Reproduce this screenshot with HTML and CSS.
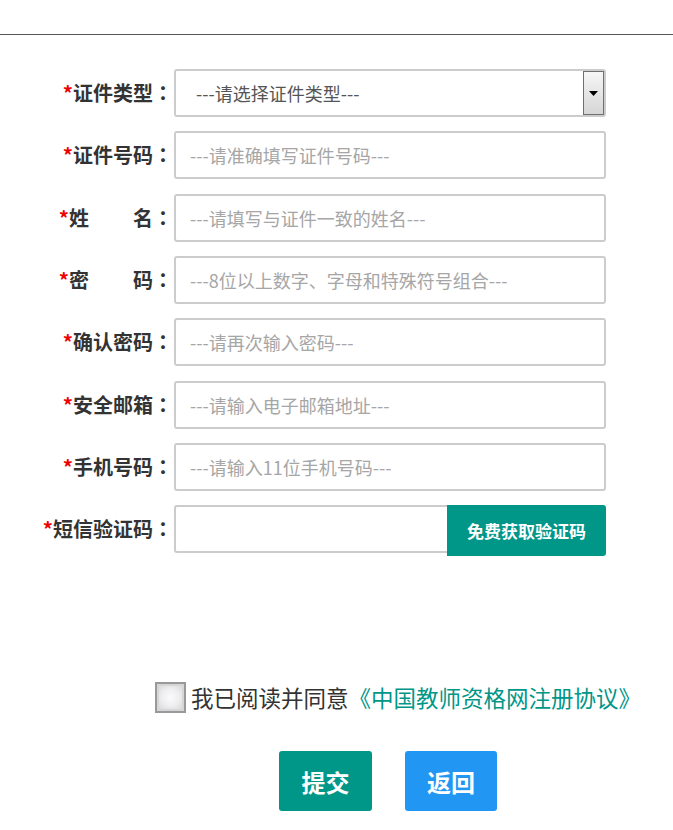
FILE: index.html
```html
<!DOCTYPE html>
<html lang="zh-CN">
<head>
<meta charset="utf-8">
<title>注册</title>
<link rel="stylesheet" href="styles.css">
</head>
<body>
<div class="topbar"></div>
<form class="form">
  <div class="row">
    <label class="label"><span class="req">*</span>证件类型<span class="colon">：</span></label>
    <div class="select">
      <span class="select-text">---请选择证件类型---</span>
      <span class="select-btn"><svg width="9" height="5" viewBox="0 0 9 5"><path d="M0 0H9L4.5 5Z" fill="#000"/></svg></span>
    </div>
  </div>
  <div class="row">
    <label class="label"><span class="req">*</span>证件号码<span class="colon">：</span></label>
    <input class="field" type="text" placeholder="---请准确填写证件号码---">
  </div>
  <div class="row">
    <label class="label"><span class="req">*</span>姓<span class="sp"></span>名<span class="colon">：</span></label>
    <input class="field" type="text" placeholder="---请填写与证件一致的姓名---">
  </div>
  <div class="row">
    <label class="label"><span class="req">*</span>密<span class="sp"></span>码<span class="colon">：</span></label>
    <input class="field" type="password" placeholder="---8位以上数字、字母和特殊符号组合---">
  </div>
  <div class="row">
    <label class="label"><span class="req">*</span>确认密码<span class="colon">：</span></label>
    <input class="field" type="password" placeholder="---请再次输入密码---">
  </div>
  <div class="row">
    <label class="label"><span class="req">*</span>安全邮箱<span class="colon">：</span></label>
    <input class="field" type="text" placeholder="---请输入电子邮箱地址---">
  </div>
  <div class="row">
    <label class="label"><span class="req">*</span>手机号码<span class="colon">：</span></label>
    <input class="field" type="text" placeholder="---请输入11位手机号码---">
  </div>
  <div class="row row-sms">
    <label class="label"><span class="req">*</span>短信验证码<span class="colon">：</span></label>
    <input class="field field-sms" type="text">
    <button class="sms-btn" type="button">免费获取验证码</button>
  </div>
</form>
<div class="agree">
  <span class="checkbox"></span>
  <span class="agree-text">我已阅读并同意<a class="agree-link" href="#">《中国教师资格网注册协议》</a></span>
</div>
<div class="actions">
  <button class="btn btn-submit" type="button">提交</button>
  <button class="btn btn-back" type="button">返回</button>
</div>
</body>
</html>
```
FILE: styles.css
```css
* { box-sizing: border-box; }
html, body {
  margin: 0;
  padding: 0;
  background: #fff;
  font-family: "Noto Sans CJK SC", "Microsoft YaHei", sans-serif;
  color: #333;
}
.topbar {
  height: 35px;
  border-bottom: 1px solid #555;
}
.form {
  margin-top: 34px;
  display: flex;
  flex-direction: column;
  gap: 14.33px;
}
.row {
  display: flex;
  align-items: center;
  height: 48px;
}
.row-sms {
  align-items: flex-start;
  height: 51px;
}
.label {
  width: 174px;
  padding-right: 1px;
  text-align: right;
  font-size: 20px;
  font-weight: bold;
  color: #333;
  white-space: nowrap;
  line-height: 48px;
}
.colon {
  display: inline-block;
  width: 20px;
  text-align: center;
  font-family: "Noto Sans CJK TC", "Noto Sans CJK SC", sans-serif;
}
.req {
  color: #e00;
}
.sp {
  display: inline-block;
  width: 44px;
}
.select {
  width: 432px;
  height: 48px;
  border: 2px solid #ccc;
  border-radius: 3px;
  display: flex;
  align-items: stretch;
  justify-content: space-between;
  background: #fff;
}
.select-text {
  padding-left: 20px;
  font-size: 18px;
  color: #555;
  line-height: 44px;
}
.select-btn {
  width: 21px;
  border: 1px solid #707070;
  background: linear-gradient(#f6f6f6, #e6e6e6 50%, #d6d6d6);
  display: flex;
  align-items: center;
  justify-content: center;
}
.field {
  width: 432px;
  height: 48px;
  border: 2px solid #ccc;
  border-radius: 3px;
  padding: 0 0 0 14px;
  font-family: inherit;
  font-size: 18px;
  color: #333;
  outline: none;
  background: #fff;
}
.field::placeholder {
  color: #a6a6a6;
}
.field-sms {
  width: 273px;
  border-right: none;
  border-radius: 3px 0 0 3px;
}
.sms-btn {
  width: 159px;
  height: 51px;
  border: none;
  border-radius: 0 3px 3px 0;
  background: #009688;
  color: #fff;
  font-family: inherit;
  font-size: 17px;
  font-weight: bold;
  padding: 0;
}
.agree {
  margin-top: 125px;
  margin-left: 155px;
  display: flex;
  align-items: center;
  gap: 5px;
  height: 32px;
}
.checkbox {
  width: 31px;
  height: 31px;
  border: 2px solid #999;
  background: radial-gradient(circle, #fbfbfb 0%, #eeeef0 45%, #d2d2d6 100%);
  box-shadow: inset 0 0 0 2px #d6d6d6;
}
.agree-text {
  font-size: 22.5px;
  color: #333;
  white-space: nowrap;
}
.agree-link {
  color: #009688;
  text-decoration: none;
}
.actions {
  margin-top: 38px;
  margin-left: 279px;
  display: flex;
  gap: 33px;
}
.btn {
  width: 93px;
  height: 60px;
  border: none;
  border-radius: 3px;
  color: #fff;
  font-family: inherit;
  font-size: 24px;
  font-weight: bold;
  padding: 0;
}
.btn-submit { background: #009688; }
.btn-back { background: #2196f3; width: 92px; }
```
